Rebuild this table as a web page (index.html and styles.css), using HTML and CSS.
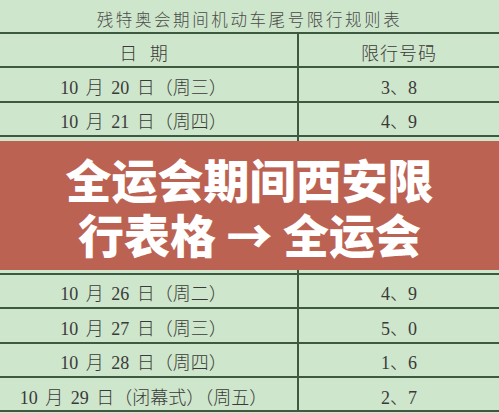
FILE: index.html
```html
<!DOCTYPE html>
<html lang="zh">
<head>
<meta charset="utf-8">
<link rel="stylesheet" href="styles.css">
</head>
<body>
<div class="page">
  <div class="title">残特奥会期间机动车尾号限行规则表</div>
  <div class="row head"><div class="c1">日 期</div><div class="c2">限行号码</div></div>
  <div class="row"><div class="c1">10 月 20 日（周三）</div><div class="c2">3、8</div></div>
  <div class="row"><div class="c1">10 月 21 日（周四）</div><div class="c2">4、9</div></div>
  <div class="row"><div class="c1"></div><div class="c2"></div></div>
  <div class="row"><div class="c1"></div><div class="c2"></div></div>
  <div class="row"><div class="c1"></div><div class="c2"></div></div>
  <div class="row"><div class="c1"></div><div class="c2"></div></div>
  <div class="row"><div class="c1">10 月 26 日（周二）</div><div class="c2">4、9</div></div>
  <div class="row"><div class="c1">10 月 27 日（周三）</div><div class="c2">5、0</div></div>
  <div class="row"><div class="c1">10 月 28 日（周四）</div><div class="c2">1、6</div></div>
  <div class="row"><div class="c1">10 月 29 日（闭幕式）（周五）</div><div class="c2">2、7</div></div>
  <div class="banner">全运会期间西安限<br>行表格 → 全运会</div>
</div>
</body>
</html>
```
FILE: styles.css
```css
html, body {
  margin: 0;
  padding: 0;
  background: #cee6cb;
}
.page {
  position: relative;
  width: 499px;
  height: 413px;
  overflow: hidden;
  background: #cee6cb;
  font-family: "Liberation Serif", "Noto Sans CJK SC", serif;
  font-weight: 300;
  color: #3a3a3a;
  font-size: 18px;
}
.title {
  box-sizing: border-box;
  height: 34px;
  border-bottom: 2px solid #3d5a41;
  text-align: center;
  font-size: 16.5px;
  letter-spacing: 2.6px;
  padding-top: 11px;
  line-height: 20px;
  color: #4a4a4a;
}
.row {
  box-sizing: border-box;
  height: 34.4px;
  border-bottom: 2px solid #3d5a41;
  display: grid;
  grid-template-columns: 297px 2px 1fr;
}
.row::before {
  content: "";
  grid-column: 2;
  grid-row: 1;
  background: #3d5a41;
}
.c1, .c2 {
  grid-row: 1;
  display: flex;
  align-items: center;
  justify-content: center;
  padding-top: 3px;
  white-space: pre;
}
.c1 { grid-column: 1; padding-right: 10px; word-spacing: 3px; }
.c2 { grid-column: 3; }
.head .c1 { word-spacing: 8px; }
.head .c2 { letter-spacing: 1px; }
.banner {
  position: absolute;
  left: 0;
  right: 0;
  top: 141px;
  height: 129px;
  box-sizing: border-box;
  padding-top: 10px;
  background: #bc6253;
  color: #ffffff;
  font-family: "Noto Sans CJK SC", sans-serif;
  font-weight: 900;
  font-size: 46px;
  line-height: 55px;
  text-align: center;
}
```
